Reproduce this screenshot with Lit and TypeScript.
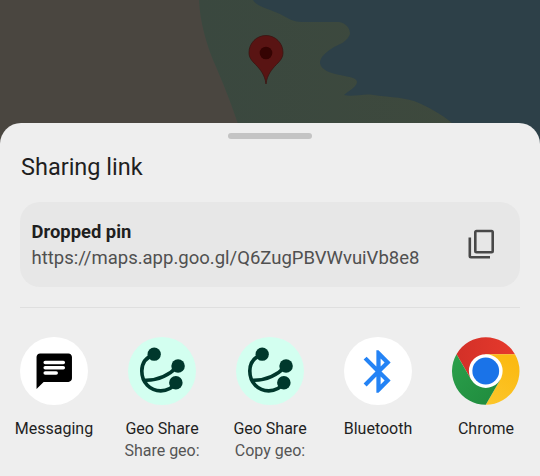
import { LitElement, html, css, svg } from "lit";
import { customElement } from "lit/decorators.js";

const chat = html`<svg class="chat" viewBox="0 0 24 24">
  <path d="M20 2H4c-1.1 0-2 .9-2 2v18l4-4h14c1.1 0 2-.9 2-2V4c0-1.1-.9-2-2-2z" />
  <path class="lines" d="M6.9 7h10.2M6.9 10h10.2M6.9 13h6.2" />
</svg>`;

const geo = html`<svg class="full geo" viewBox="0 0 67 67">
  <path d="M26 16.8C18.5 19.5 13.7 25.5 13.7 33.5C13.7 45 22 53.2 32.5 53.2C39 53.2 44 50.5 47.7 45.2M16.5 42.6C28 43 40 38.5 49.7 28.5" />
  <circle cx="26" cy="16.8" r="6.6" />
  <circle cx="49.7" cy="28.5" r="6.7" />
  <circle cx="47.5" cy="45.2" r="6.7" />
</svg>`;

const bluetooth = html`<svg class="bt" viewBox="0 0 24 24">
  <path d="M17.71 7.71L12 2h-1v7.59L6.41 5 5 6.41 10.59 12 5 17.59 6.41 19 11 14.41V22h1l5.71-5.71-4.3-4.29 4.3-4.29zM13 5.83l1.88 1.88L13 9.59V5.83zm1.88 10.46L13 18.17v-3.76l1.88 1.88z" />
</svg>`;

const chrome = html`<svg class="full" viewBox="-34 -34 68 68">
  <defs>
    <linearGradient id="r" x1="0" x2="1"><stop offset="0" stop-color="#d33028" /><stop offset="1" stop-color="#e6392c" /></linearGradient>
    <linearGradient id="y" x1="0" y1="1" x2=".4" y2="0"><stop offset="0" stop-color="#fcc62b" /><stop offset="1" stop-color="#fbba12" /></linearGradient>
    <linearGradient id="g" x1="1" y1="1" x2="0" y2="0"><stop offset="0" stop-color="#1f8a3d" /><stop offset="1" stop-color="#2ba04b" /></linearGradient>
  </defs>
  <path fill="url(#r)" d="M-29.45-17A34 34 0 0 1 29.45-17H0L-14.72 8.5Z" />
  <path fill="url(#y)" d="M29.45-17A34 34 0 0 1 0 34L14.72 8.5L0-17Z" />
  <path fill="url(#g)" d="M0 34A34 34 0 0 1-29.45-17L-14.72 8.5L14.72 8.5Z" />
  <circle r="17" fill="#fff" />
  <circle r="13.5" fill="#1a73e8" />
</svg>`;

const targets = [
  { name: "Messaging", detail: "", tone: "white", icon: chat },
  { name: "Geo Share", detail: "Share geo:", tone: "mint", icon: geo },
  { name: "Geo Share", detail: "Copy geo:", tone: "mint", icon: geo },
  { name: "Bluetooth", detail: "", tone: "white", icon: bluetooth },
  { name: "Chrome", detail: "", tone: "", icon: chrome },
];

@customElement("app-root")
export class AppRoot extends LitElement {
  static styles = css`
    :host {
      display: grid;
      grid-template: 123px 353px / 540px;
      width: 540px;
      height: 476px;
      overflow: hidden;
      font-family: Roboto, "Liberation Sans", sans-serif;
      color: #1f1f1f;
    }
    svg { display: block; flex: none; }
    .map { grid-area: 1 / 1; width: 540px; height: 150px; }
    .sheet {
      grid-area: 2 / 1;
      z-index: 1;
      display: flex;
      flex-direction: column;
      background: #eee;
      border-radius: 21px 21px 0 0;
    }
    .handle {
      align-self: center;
      width: 84px;
      height: 6px;
      margin-top: 10px;
      border-radius: 3px;
      background: #c4c4c4;
    }
    h1 {
      margin: 13px 21px 0;
      font-size: 23.5px;
      line-height: 30px;
      font-weight: 400;
    }
    .card {
      display: flex;
      align-items: center;
      justify-content: space-between;
      box-sizing: border-box;
      height: 85px;
      margin: 20px 20px 0;
      padding: 0 22px 0 11.5px;
      border-radius: 20px;
      background: #e7e7e7;
    }
    .title { font-size: 18.4px; line-height: 26px; font-weight: 700; }
    .link { font-size: 18.5px; line-height: 26px; color: #505050; }
    .copy { width: 32px; height: 32px; fill: none; stroke: #484848; stroke-width: 2.6; }
    .rule { height: 1px; margin: 20px 20px 0; background: #dfdfdf; }
    .targets {
      display: grid;
      grid-template-columns: repeat(5, 108px);
      margin-top: 29px;
    }
    .target {
      display: flex;
      flex-direction: column;
      align-items: center;
      font-size: 16px;
      line-height: 22px;
    }
    .disc {
      display: flex;
      align-items: center;
      justify-content: center;
      width: 67.5px;
      height: 68px;
      margin-bottom: 13px;
      border-radius: 50%;
    }
    .white { background: #fff; }
    .mint { background: #d3fff0; }
    .detail { color: #555; }
    .chat { width: 42.5px; height: 42.5px; }
    .lines { stroke: #fff; stroke-width: 2; stroke-linecap: round; }
    .full { width: 100%; height: 100%; }
    .geo { fill: #00382c; }
    .geo path { fill: none; stroke: #00382c; stroke-width: 3.6; }
    .bt { width: 51px; height: 51px; fill: #2483f5; }
  `;

  private map() {
    return html`<svg class="map" viewBox="0 0 540 150">
      <defs>
        <linearGradient id="grass"><stop offset="0" stop-color="#3a483f" /><stop offset="1" stop-color="#3e493d" /></linearGradient>
      </defs>
      ${svg`
        <rect width="540" height="150" fill="#4a4640" />
        <path fill="url(#grass)" d="M199 0C200 22 206 42 213 60C224 85 231 103 239 127L245 150H470V0Z" />
        <path fill="#2d4048" d="M253 0C257 7 270 9 280 14C289 19 294 22 302 22H339C346 23 350 28 350 34C347 42 340 44 334 47C326 52 320 57 320 63C321 70 330 73 340 75C350 77 357 78 357 82C357 87 348 91 344 95C352 97 361 94 370 94.500C384 97 402 97 414 101C429 107 441 114 452 123L480 150H540V0Z" />
        <path fill="#591413" stroke="#3a1412" stroke-width=".8" d="M266 84C265 75 260 69 255.500 64.500C251.500 60.500 249 57.500 249 52.500A17 17 0 0 1 283 52.500C283 57.500 280.500 60.500 276.500 64.500C272 69 267 75 266 84Z" />
        <circle cx="266" cy="53" r="6.300" fill="#350403" />
      `}
    </svg>`;
  }

  render() {
    return html`
      ${this.map()}
      <section class="sheet">
        <div class="handle"></div>
        <h1>Sharing link</h1>
        <div class="card">
          <div>
            <div class="title">Dropped pin</div>
            <div class="link">https://maps.app.goo.gl/Q6ZugPBVWvuiVb8e8</div>
          </div>
          <svg class="copy" viewBox="0 0 32 32">
            <rect x="9.3" y="2" width="17.4" height="21.2" rx="1.2" />
            <path d="M3.8 8.6V27q0 1.2 1.2 1.2H24" />
          </svg>
        </div>
        <div class="rule"></div>
        <div class="targets">
          ${targets.map(
            (t) => html`<div class="target">
              <div class="disc ${t.tone}">${t.icon}</div>
              <div>${t.name}</div>
              <div class="detail">${t.detail}</div>
            </div>`
          )}
        </div>
      </section>
    `;
  }
}
